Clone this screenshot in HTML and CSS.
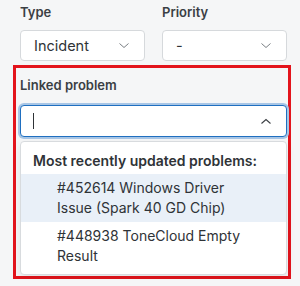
FILE: index.html
```html
<!DOCTYPE html>
<html>
  <head>
    <meta charset="UTF-8" />
    <title>Linked problem</title>
    <link rel="stylesheet" href="styles.css">
  </head>
  <body>
    <div class="form">
      <div class="row">
        <div class="field">
          <label class="label">Type</label>
          <div class="select">
            <span>Incident</span>
            <svg class="chevron" width="12" height="7" viewBox="0 0 12 7"><path d="M1.5 1.5l4.5 4 4.5-4" fill="none" stroke="#7a7f84" stroke-width="1"/></svg>
          </div>
        </div>
        <div class="field">
          <label class="label">Priority</label>
          <div class="select">
            <span>-</span>
            <svg class="chevron" width="12" height="7" viewBox="0 0 12 7"><path d="M1.5 1.5l4.5 4 4.5-4" fill="none" stroke="#7a7f84" stroke-width="1"/></svg>
          </div>
        </div>
      </div>

      <!-- highlighted field -->
      <div class="highlight">
        <label class="label">Linked problem</label>
        <div class="combo">
          <span class="caret"></span>
          <svg class="chevron" width="12" height="7" viewBox="0 0 12 7"><path d="M1.5 5.5l4.5-4 4.5 4" fill="none" stroke="#3b3f44" stroke-width="1.1"/></svg>
        </div>
        <div class="dropdown">
          <div class="dropdown-title">Most recently updated problems:</div>
          <div class="option active">#452614 Windows Driver Issue (Spark 40 GD Chip)</div>
          <div class="option">#448938 ToneCloud Empty Result</div>
        </div>
      </div>
    </div>
  </body>
</html>
```

FILE: styles.css
```css
*,
*::after,
*::before {
  box-sizing: border-box;
}
body {
  margin: 0;
  font-family: Inter, 'Noto Sans', sans-serif;
  color: #2f3337;
  background-color: #f5f6f7;
}
.form {
  padding: 4px 13px 0 20px;
}
.row {
  display: grid;
  grid-template-columns: 1fr 1fr;
  column-gap: 17px;
}
.label {
  display: block;
  font-size: 13px;
  line-height: 16px;
  font-weight: 600;
  color: #3b3f44;
}
.select {
  display: flex;
  align-items: center;
  justify-content: space-between;
  height: 31px;
  margin-top: 10px;
  padding: 0 14px 0 13px;
  font-size: 14.5px;
  background-color: #fff;
  border: 1px solid #d6d9dc;
  border-radius: 4px;
}
.chevron {
  display: block;
}
/* red annotation box */
.highlight {
  margin: 4px -4px 0 -7px;
  padding: 9px 1px 1px 4px;
  border: 3px solid #e3141c;
}
.combo {
  display: flex;
  align-items: center;
  justify-content: space-between;
  height: 32px;
  margin-top: 12px;
  padding: 0 14px 0 12px;
  background-color: #fff;
  border: 1px solid #1f6fc0;
  border-radius: 4px;
  box-shadow: 0 0 0 2px #a8c6e6;
}
.caret {
  width: 1px;
  height: 16px;
  background-color: #2f3337;
}
.dropdown {
  margin-top: 4px;
  padding-bottom: 4px;
  font-size: 14px;
  line-height: 20px;
  background-color: #fff;
  border: 1px solid #d8dbde;
  border-radius: 4px;
  box-shadow: 0 4px 10px rgba(0, 0, 0, 0.08);
}
.dropdown-title {
  padding: 9px 12px 3px;
  font-weight: 600;
}
.option {
  padding: 4px 38px 4px 36px;
}
.option.active {
  background-color: #e9f0f8;
}
```
